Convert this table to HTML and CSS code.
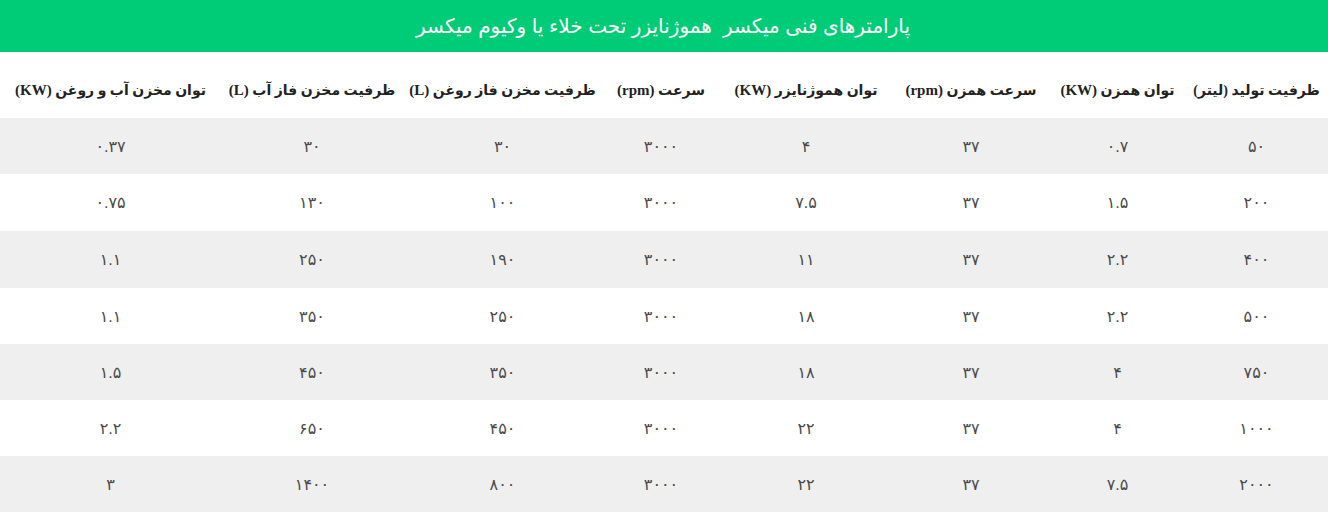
FILE: index.html
```html
<!DOCTYPE html>
<html lang="fa" dir="rtl">
<head>
<meta charset="utf-8">
<title>پارامترهای فنی</title>
<link rel="stylesheet" href="styles.css">
</head>
<body>
<div class="page">
  <div class="title">پارامترهای فنی میکسر  هموژنایزر تحت خلاء یا وکیوم میکسر</div>
  <table class="spec">
    <colgroup>
      <col class="c1"><col class="c2"><col class="c3"><col class="c4">
      <col class="c5"><col class="c6"><col class="c7"><col class="c8">
    </colgroup>
    <thead>
      <tr>
        <th>ظرفیت تولید (لیتر)</th>
        <th>توان همزن <span class="u">(KW)</span></th>
        <th>سرعت همزن <span class="u">(rpm)</span></th>
        <th>توان هموژنایزر <span class="u">(KW)</span></th>
        <th>سرعت <span class="u">(rpm)</span></th>
        <th>ظرفیت مخزن فاز روغن <span class="u">(L)</span></th>
        <th>ظرفیت مخزن فاز آب <span class="u">(L)</span></th>
        <th>توان مخزن آب و روغن <span class="u">(KW)</span></th>
      </tr>
    </thead>
    <tbody>
      <tr><td>۵۰</td><td>۰.۷</td><td>۳۷</td><td>۴</td><td>۳۰۰۰</td><td>۳۰</td><td>۳۰</td><td>۰.۳۷</td></tr>
      <tr><td>۲۰۰</td><td>۱.۵</td><td>۳۷</td><td>۷.۵</td><td>۳۰۰۰</td><td>۱۰۰</td><td>۱۳۰</td><td>۰.۷۵</td></tr>
      <tr><td>۴۰۰</td><td>۲.۲</td><td>۳۷</td><td>۱۱</td><td>۳۰۰۰</td><td>۱۹۰</td><td>۲۵۰</td><td>۱.۱</td></tr>
      <tr><td>۵۰۰</td><td>۲.۲</td><td>۳۷</td><td>۱۸</td><td>۳۰۰۰</td><td>۲۵۰</td><td>۳۵۰</td><td>۱.۱</td></tr>
      <tr><td>۷۵۰</td><td>۴</td><td>۳۷</td><td>۱۸</td><td>۳۰۰۰</td><td>۳۵۰</td><td>۴۵۰</td><td>۱.۵</td></tr>
      <tr><td>۱۰۰۰</td><td>۴</td><td>۳۷</td><td>۲۲</td><td>۳۰۰۰</td><td>۴۵۰</td><td>۶۵۰</td><td>۲.۲</td></tr>
      <tr><td>۲۰۰۰</td><td>۷.۵</td><td>۳۷</td><td>۲۲</td><td>۳۰۰۰</td><td>۸۰۰</td><td>۱۴۰۰</td><td>۳</td></tr>
    </tbody>
  </table>
</div>
</body>
</html>
```

FILE: styles.css
```css
html, body {
  margin: 0;
  padding: 0;
  background: #ffffff;
}

.page {
  width: 1328px;
  font-family: "Liberation Sans", "DejaVu Sans", sans-serif;
}

.title {
  background: #00cc77;
  color: #ffffff;
  height: 52px;
  display: flex;
  align-items: center;
  justify-content: center;
  font-size: 20px;
  white-space: pre;
  padding-right: 2px;
}

.spec {
  width: 1328px;
  border-collapse: collapse;
  table-layout: fixed;
}

.c1 { width: 143px; }
.c2 { width: 135px; }
.c3 { width: 158px; }
.c4 { width: 172px; }
.c5 { width: 118px; }
.c6 { width: 199px; }
.c7 { width: 182px; }
.c8 { width: 221px; }

.spec th {
  height: 66px;
  box-sizing: border-box;
  padding: 10px 2px 0;
  font-family: "Liberation Serif", "DejaVu Sans", serif;
  font-weight: bold;
  font-size: 14px;
  color: #222222;
  text-align: center;
  vertical-align: middle;
  white-space: nowrap;
}

.spec th .u {
  font-size: 15px;
}

.spec td {
  height: 56px;
  padding: 0;
  font-size: 16px;
  color: #4a4a4a;
  text-align: center;
  vertical-align: middle;
}

.spec tbody tr:nth-child(odd) {
  background: #efefef;
}

.spec tbody tr:nth-child(2) td { height: 57px; }
.spec tbody tr:nth-child(3) td { height: 57px; }
```
